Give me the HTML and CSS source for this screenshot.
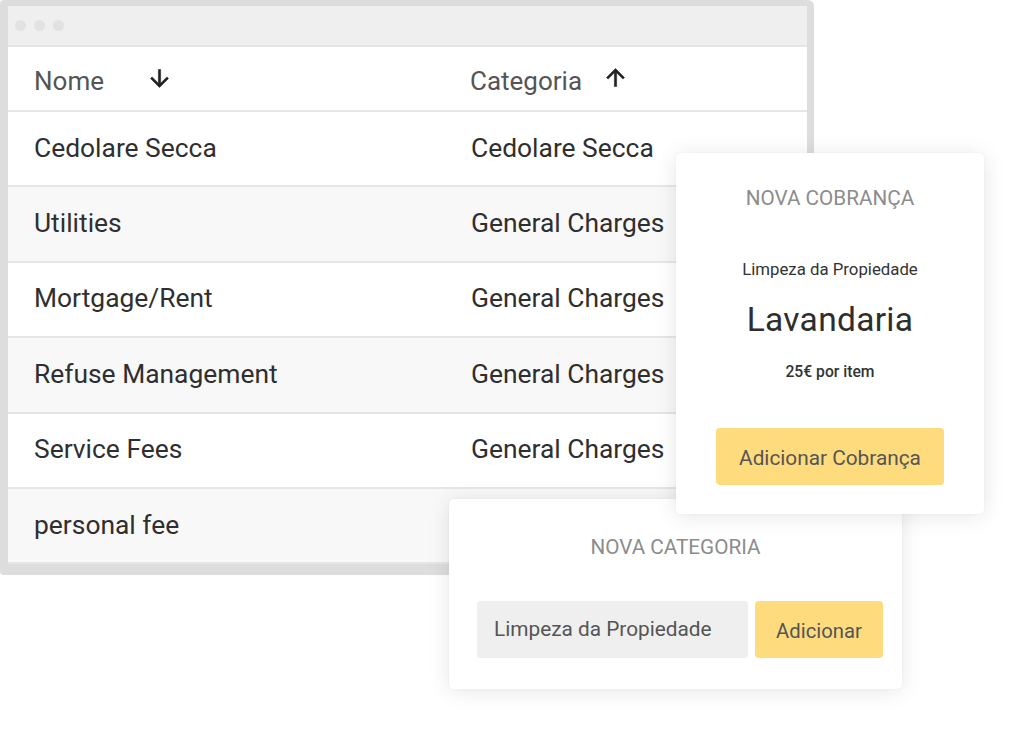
FILE: index.html
```html
<!DOCTYPE html>
<html lang="pt">
<head>
<meta charset="utf-8">
<title>Categorias</title>
<link rel="stylesheet" href="styles.css">
</head>
<body>
<div class="stage">
  <div class="window">
    <div class="titlebar">
      <span class="dot"></span><span class="dot"></span><span class="dot"></span>
    </div>
    <div class="table">
      <div class="row head">
        <div class="cell c1"><span>Nome</span>
          <svg class="arrow down" viewBox="0 0 24 24"><path d="M20 12l-1.41-1.41L13 16.17V4h-2v12.17l-5.58-5.59L4 12l8 8 8-8z"/></svg>
        </div>
        <div class="cell c2"><span>Categoria</span>
          <svg class="arrow up" viewBox="0 0 24 24"><path d="M4 12l1.41 1.41L11 7.83V20h2V7.83l5.58 5.59L20 12l-8-8-8 8z"/></svg>
        </div>
      </div>
      <div class="row"><div class="cell c1">Cedolare Secca</div><div class="cell c2">Cedolare Secca</div></div>
      <div class="row alt"><div class="cell c1">Utilities</div><div class="cell c2">General Charges</div></div>
      <div class="row"><div class="cell c1">Mortgage/Rent</div><div class="cell c2">General Charges</div></div>
      <div class="row alt"><div class="cell c1">Refuse Management</div><div class="cell c2">General Charges</div></div>
      <div class="row"><div class="cell c1">Service Fees</div><div class="cell c2">General Charges</div></div>
      <div class="row alt"><div class="cell c1">personal fee</div><div class="cell c2"></div></div>
    </div>
  </div>

  <div class="card card-cat">
    <div class="card-title">NOVA CATEGORIA</div>
    <div class="cat-form">
      <div class="input">Limpeza da Propiedade</div>
      <div class="btn btn-small">Adicionar</div>
    </div>
  </div>

  <div class="card card-charge">
    <div class="card-title">NOVA COBRANÇA</div>
    <div class="sub">Limpeza da Propiedade</div>
    <div class="big">Lavandaria</div>
    <div class="price">25€ por item</div>
    <div class="btn btn-wide">Adicionar Cobrança</div>
  </div>
</div>
</body>
</html>
```

FILE: styles.css
```css
* { box-sizing: border-box; }
html, body { margin: 0; padding: 0; background: #fff; }
body {
  font-family: Roboto, "Liberation Sans", Arial, sans-serif;
  color: #333;
  width: 1024px;
  height: 733px;
  overflow: hidden;
}
.stage { position: relative; width: 1024px; height: 733px; }

.window {
  width: 814px;
  border: 7px solid #dddddd;
  border-left-width: 8px;
  border-top-width: 6px;
  border-bottom-width: 11px;
  border-radius: 4px 6px 4px 4px;
  background: #fff;
}
.titlebar {
  height: 41px;
  background: #efefef;
  border-bottom: 2px solid #e5e5e5;
  display: flex;
  align-items: center;
  gap: 8px;
  padding-left: 7px;
  padding-bottom: 1px;
}
.dot {
  width: 11px; height: 11px; border-radius: 50%;
  background: #e2e2e2;
}
.row {
  display: flex;
  align-items: center;
  height: 75.4px;
  border-bottom: 2px solid #e6e6e6;
  font-size: 26.4px;
  color: #2f2f2f;
  padding-bottom: 2px;
}
.row.alt { background: #f8f8f8; }
.row.head { height: 65px; color: #555; padding-top: 4px; padding-bottom: 0; font-size: 26px; }
.cell { display: flex; align-items: center; }
.c1 { width: 437px; padding-left: 26px; }
.c2 { flex: 1; padding-left: 26px; }
.head .c2 { padding-left: 25px; }
.arrow { width: 27px; height: 27px; fill: #222; }
.arrow path { stroke: #222; stroke-width: 0.5; }
.arrow.down { margin-left: 42px; margin-top: -4px; }
.arrow.up { margin-left: 20px; margin-top: -6px; }

.card {
  position: absolute;
  background: #fff;
  border-radius: 5px;
  box-shadow: 0 2px 22px rgba(0,0,0,0.10), 0 0 3px rgba(0,0,0,0.04);
  text-align: center;
}
.card-title {
  font-size: 20.7px;
  color: #8c8c8c;
}
.card-charge {
  left: 676px; top: 153px;
  width: 308px; height: 361px;
  padding-top: 33px;
  z-index: 3;
}
.sub { font-size: 16.8px; color: #333; margin-top: 49px; }
.big { font-size: 33.5px; color: #2e2e2e; margin-top: 21px; letter-spacing: 0.3px; }
.price { font-size: 15.7px; font-weight: 500; color: #333; margin-top: 23px; }
.btn {
  background: #fedb7d;
  border-radius: 4px;
  color: #555;
  display: flex; align-items: center; justify-content: center;
}
.btn-wide {
  width: 228px; height: 57px;
  margin: 47px auto 0 40px;
  font-size: 20.8px;
  padding-top: 2px;
}
.card-cat {
  left: 449px; top: 499px;
  width: 453px; height: 190px;
  padding-top: 36px;
  z-index: 2;
}
.cat-form {
  display: flex;
  gap: 7px;
  margin: 42px 0 0 28px;
}
.input {
  width: 271px; height: 57px;
  background: #efefef;
  border-radius: 3px;
  font-size: 20.8px;
  color: #555;
  display: flex; align-items: center;
  padding-left: 17px;
  padding-bottom: 2px;
}
.btn-small {
  width: 128px; height: 57px;
  font-size: 20.3px;
  padding-top: 3px;
}
```
